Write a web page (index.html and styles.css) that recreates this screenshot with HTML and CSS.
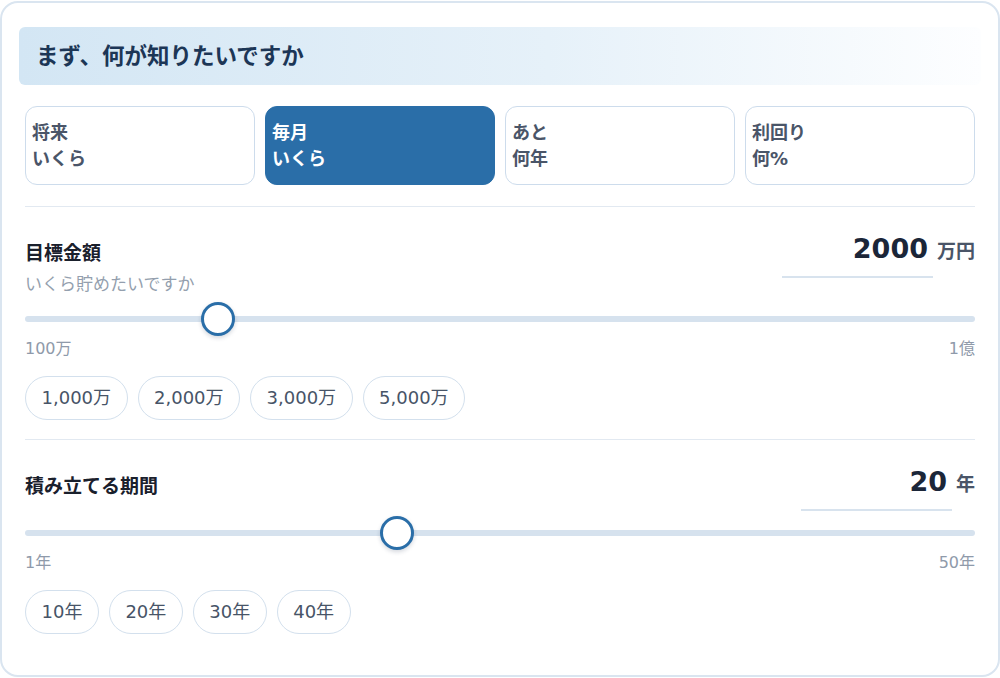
FILE: index.html
```html
<!DOCTYPE html>
<html lang="ja">
<head>
<meta charset="utf-8">
<title>積立シミュレーター</title>
<link rel="stylesheet" href="styles.css">
</head>
<body>
<main class="card">
  <header class="banner">
    <h1 class="banner-title">まず、何が知りたいですか</h1>
  </header>

  <div class="card-body">
    <nav class="modes">
      <button class="mode" type="button">将来<br>いくら</button>
      <button class="mode is-active" type="button">毎月<br>いくら</button>
      <button class="mode" type="button">あと<br>何年</button>
      <button class="mode" type="button">利回り<br>何%</button>
    </nav>

    <section class="field">
      <div class="field-head">
        <div class="field-label">
          <h2 class="field-title">目標金額</h2>
          <p class="field-note">いくら貯めたいですか</p>
        </div>
        <div class="value">
          <input class="value-input" type="text" value="2000" aria-label="目標金額">
          <span class="unit">万円</span>
        </div>
      </div>
      <input class="slider" type="range" min="100" max="10000" step="100" value="2000" aria-label="目標金額">
      <div class="scale"><span>100万</span><span>1億</span></div>
      <div class="chips">
        <button class="chip" type="button">1,000万</button>
        <button class="chip" type="button">2,000万</button>
        <button class="chip" type="button">3,000万</button>
        <button class="chip" type="button">5,000万</button>
      </div>
    </section>

    <section class="field">
      <div class="field-head">
        <div class="field-label">
          <h2 class="field-title">積み立てる期間</h2>
        </div>
        <div class="value">
          <input class="value-input" type="text" value="20" aria-label="積み立てる期間">
          <span class="unit">年</span>
        </div>
      </div>
      <input class="slider" type="range" min="1" max="50" step="1" value="20" aria-label="積み立てる期間">
      <div class="scale"><span>1年</span><span>50年</span></div>
      <div class="chips">
        <button class="chip" type="button">10年</button>
        <button class="chip" type="button">20年</button>
        <button class="chip" type="button">30年</button>
        <button class="chip" type="button">40年</button>
      </div>
    </section>
  </div>
</main>
</body>
</html>
```

FILE: styles.css
```css
* {
  box-sizing: border-box;
}

html {
  font-size: 18px;
}

body {
  margin: 0;
  padding-top: 1px;
  background: #ffffff;
  font-family: "DejaVu Sans", "Noto Sans CJK JP", sans-serif;
  color: #1a202c;
}

button,
input {
  font-family: inherit;
}

/* outer card */
.card {
  width: 1000px;
  height: 676px;
  border: 2px solid #dae5f0;
  border-radius: 18px;
  background: #ffffff;
  padding: 24px 17px 0;
}

/* question banner */
.banner {
  height: 58px;
  display: flex;
  align-items: center;
  padding: 0 17px;
  border-radius: 6px;
  background: linear-gradient(90deg, #d3e6f4 0%, #e6f1f9 55%, #fdfeff 100%);
}

.banner-title {
  margin: 0;
  font-size: 22.5px;
  font-weight: 700;
  color: #1c3656;
  line-height: 1;
}

.card-body {
  padding: 0 6px;
}

/* mode selector */
.modes {
  display: grid;
  grid-template-columns: repeat(4, 1fr);
  gap: 10px;
  margin: 21px 0;
}

.mode {
  height: 79px;
  display: flex;
  align-items: center;
  padding: 0 6px;
  border: 1.5px solid #cddcec;
  border-radius: 12px;
  background: #ffffff;
  color: #4a5568;
  font-size: 18px;
  font-weight: 700;
  line-height: 1.4;
  text-align: left;
}

.mode.is-active {
  background: #2a6ea8;
  border-color: #2a6ea8;
  color: #ffffff;
}

/* input fields */
.field {
  border-top: 1px solid #e2e9f1;
  padding: 22px 0 19px;
}

.field-head {
  display: flex;
  justify-content: space-between;
  align-items: flex-start;
}

.field-label {
  padding-top: 12px;
}

.field-title {
  margin: 0;
  font-size: 19px;
  font-weight: 700;
  line-height: 24px;
  color: #1a202c;
}

.field-note {
  margin: 9px 0 3px;
  font-size: 17px;
  line-height: 20px;
  color: #949fae;
}

.value {
  display: flex;
  align-items: baseline;
  gap: 4px;
}

.value-input {
  width: 151px;
  height: 49px;
  padding: 0 5px 8px 0;
  border: 0;
  border-bottom: 2px solid #d8e3ee;
  background: transparent;
  text-align: right;
  font-size: 27px;
  font-weight: 700;
  line-height: 39px;
  color: #1b2638;
  outline: none;
}

.unit {
  font-size: 19px;
  font-weight: 700;
  color: #4a5568;
}

/* range slider */
.slider {
  -webkit-appearance: none;
  appearance: none;
  display: block;
  width: 100%;
  height: 34px;
  margin: 5px 0 0;
  background: transparent;
}

.slider::-webkit-slider-runnable-track {
  height: 6px;
  border-radius: 3px;
  background: #d6e2ee;
}

.slider::-webkit-slider-thumb {
  -webkit-appearance: none;
  appearance: none;
  box-sizing: border-box;
  width: 34px;
  height: 34px;
  margin-top: -14px;
  border: 3px solid #2a6ea8;
  border-radius: 50%;
  background: #ffffff;
  box-shadow: 0 2px 4px rgba(20, 40, 70, 0.18);
}

.scale {
  display: flex;
  justify-content: space-between;
  margin-top: 3px;
  font-size: 16px;
  line-height: 20px;
  color: #8f9aaa;
}

/* preset chips */
.chips {
  display: flex;
  gap: 10px;
  margin-top: 17px;
}

.chip {
  height: 44px;
  padding: 0 15.5px;
  border: 1.5px solid #d3e0ed;
  border-radius: 999px;
  background: #ffffff;
  color: #475467;
  font-size: 18px;
  line-height: 1;
}
```
